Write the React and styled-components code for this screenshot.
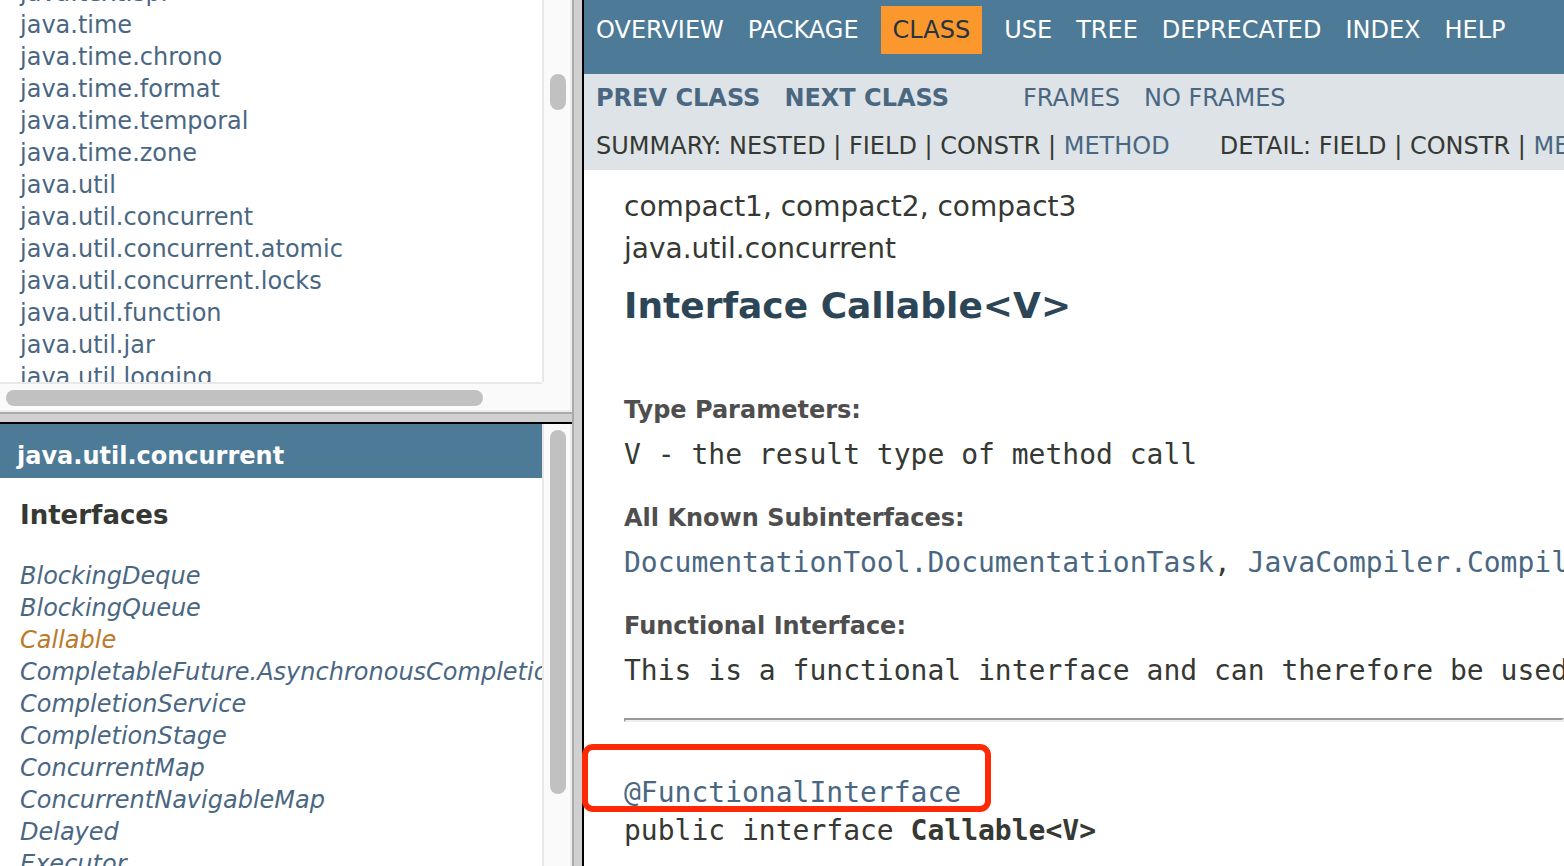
import React from "react";
import styled, { createGlobalStyle } from "styled-components";

const GlobalStyle = createGlobalStyle`
  * { box-sizing: border-box; }
  body {
    margin: 0;
    background: #fff;
    color: #353833;
    font-family: "DejaVu Sans", Verdana, sans-serif;
    font-size: 24px;
    line-height: 28px;
    overflow: hidden;
  }
`;

const Frameset = styled.div`
  display: grid;
  grid-template-columns: 572fr 12px 980fr;
  height: 100vh;
  overflow: hidden;
`;

const LeftColumn = styled.div`
  display: grid;
  grid-template-rows: 412fr 12px 442fr;
  min-width: 0;
  min-height: 0;
`;

const Splitter = styled.div`
  background: #d0d0d0;
  border: 0 solid #000;
  ${(p) =>
    p.$vertical
      ? "border-left: 2px solid #aaa; border-right-width: 2px;"
      : "border-top: 2px solid #aaa; border-bottom-width: 2px;"}
`;

const Frame = styled.section`
  display: grid;
  grid-template-columns: minmax(0, 1fr) 30px;
  grid-template-rows: minmax(0, 1fr) ${(p) => (p.$both ? "30px" : "")};
  min-height: 0;
`;

const FrameBody = styled.div`
  overflow: hidden;
  white-space: nowrap;
`;

const VerticalTrack = styled.div`
  background: #fafafa;
  border-left: 2px solid #e8e8e8;
  border-right: 2px solid #ededed;
  padding: ${(p) => p.$start}px 4px 0 6px;
`;

const HorizontalTrack = styled.div`
  background: #fafafa;
  border-top: 2px solid #e8e8e8;
  border-bottom: 2px solid #ededed;
  padding: 6px 0 4px 6px;
`;

const TrackCorner = styled.div`
  background: #fafafa;
  border-right: 2px solid #ededed;
  border-bottom: 2px solid #ededed;
`;

const Thumb = styled.div`
  background: #c1c1c1;
  border-radius: 8px;
  width: ${(p) => p.$width || "16px"};
  height: ${(p) => p.$height || "16px"};
`;

const List = styled.ul`
  list-style: none;
  margin: ${(p) => p.$scrolled || 0}px 0 0;
  padding: 0 20px;
  line-height: 32px;
`;

const Link = styled.a`
  color: ${(p) => (p.$current ? "#bb7a2a" : "#4a6782")};
  font-style: ${(p) => (p.$italic ? "italic" : "normal")};
  font-weight: ${(p) => (p.$bold ? "bold" : "normal")};
  text-decoration: none;
`;

const PackageBar = styled.h1`
  margin: 0;
  padding: 18px 17px 8px;
  background: #4d7a97;
  color: #fff;
  font-size: 24px;
  line-height: 28px;
  a { color: inherit; text-decoration: none; }
`;

const GroupTitle = styled.h2`
  margin: 22px 20px 30px;
  font-size: 26px;
  line-height: 30px;
`;

const Main = styled.main`
  min-width: 0;
  white-space: nowrap;
`;

const TopNav = styled.ul`
  display: flex;
  list-style: none;
  margin: 0;
  padding: 6px 0 20px;
  background: #4d7a97;
`;

const TopNavItem = styled.li`
  padding: 10px 12px;
  margin: 0 ${(p) => (p.$active ? 10 : 0)}px;
  background: ${(p) => (p.$active ? "#fb982d" : "transparent")};
  color: ${(p) => (p.$active ? "#253441" : "#fff")};
  a { color: inherit; text-decoration: none; }
`;

const SubNav = styled.div`
  background: #dee3e7;
`;

const SubNavRow = styled.div`
  display: flex;
  gap: ${(p) => p.$gap}px;
  padding: 10px 12px;
`;

const SubNavGroup = styled.div`
  display: flex;
  gap: 24px;
`;

const Content = styled.div`
  padding: 16px 0 0 40px;
`;

const SubTitle = styled.div`
  font-size: 28px;
  line-height: 42px;
`;

const Title = styled.h2`
  margin: 15px 0 69px;
  color: #2c4557;
  font-size: 36px;
  line-height: 42px;
`;

const Details = styled.dl`
  margin: 0;
`;

const Term = styled.dt`
  margin-bottom: 13px;
  color: #4e4e4e;
  font-weight: bold;
`;

const Definition = styled.dd`
  margin: 0 0 31px;
  font-family: "DejaVu Sans Mono", monospace;
  font-size: 28px;
  line-height: 36px;
`;

const Rule = styled.hr`
  margin: -2px 0 0;
  border: 2px solid #999;
  border-color: #999 #eee #eee #999;
`;

const Signature = styled.pre`
  position: relative;
  margin: 52px 0 0;
  font-family: "DejaVu Sans Mono", monospace;
  font-size: 28px;
  line-height: 38px;
`;

const Marker = styled.span`
  position: absolute;
  left: -42px;
  top: -30px;
  width: 409px;
  height: 68px;
  border: 6px solid #ff2a05;
  border-radius: 11px;
  pointer-events: none;
`;

const packages = [
  "java.text.spi", "java.time", "java.time.chrono", "java.time.format",
  "java.time.temporal", "java.time.zone", "java.util", "java.util.concurrent",
  "java.util.concurrent.atomic", "java.util.concurrent.locks",
  "java.util.function", "java.util.jar", "java.util.logging",
];

const interfaces = [
  "BlockingDeque", "BlockingQueue", "Callable",
  "CompletableFuture.AsynchronousCompletionTask", "CompletionService",
  "CompletionStage", "ConcurrentMap", "ConcurrentNavigableMap", "Delayed",
  "Executor",
];

const navItems = ["OVERVIEW", "PACKAGE", "CLASS", "USE", "TREE", "DEPRECATED", "INDEX", "HELP"];

export default function App() {
  return (
    <>
      <GlobalStyle />
      <Frameset>
        <LeftColumn>
          <Frame $both>
            <FrameBody>
              <List $scrolled={-23}>
                {packages.map((name) => (
                  <li key={name}><Link href="#">{name}</Link></li>
                ))}
              </List>
            </FrameBody>
            <VerticalTrack $start={74}><Thumb $height="36px" /></VerticalTrack>
            <HorizontalTrack><Thumb $width="89%" /></HorizontalTrack>
            <TrackCorner />
          </Frame>
          <Splitter />
          <Frame>
            <FrameBody>
              <PackageBar><a href="#">java.util.concurrent</a></PackageBar>
              <GroupTitle>Interfaces</GroupTitle>
              <List>
                {interfaces.map((name) => (
                  <li key={name}>
                    <Link href="#" $italic $current={name === "Callable"}>{name}</Link>
                  </li>
                ))}
              </List>
            </FrameBody>
            <VerticalTrack $start={6}><Thumb $height="364px" /></VerticalTrack>
          </Frame>
        </LeftColumn>
        <Splitter $vertical />
        <Main>
          <nav>
            <TopNav>
              {navItems.map((name) => (
                <TopNavItem key={name} $active={name === "CLASS"}>
                  {name === "CLASS" ? name : <a href="#">{name}</a>}
                </TopNavItem>
              ))}
            </TopNav>
            <SubNav>
              <SubNavRow $gap={74}>
                <SubNavGroup>
                  <Link href="#" $bold>PREV CLASS</Link>
                  <Link href="#" $bold>NEXT CLASS</Link>
                </SubNavGroup>
                <SubNavGroup>
                  <Link href="#">FRAMES</Link>
                  <Link href="#">NO FRAMES</Link>
                </SubNavGroup>
              </SubNavRow>
              <SubNavRow $gap={50}>
                <div>SUMMARY: NESTED | FIELD | CONSTR | <Link href="#">METHOD</Link></div>
                <div>DETAIL: FIELD | CONSTR | <Link href="#">METHOD</Link></div>
              </SubNavRow>
            </SubNav>
          </nav>
          <Content>
            <SubTitle>compact1, compact2, compact3</SubTitle>
            <SubTitle>java.util.concurrent</SubTitle>
            <Title>Interface Callable&lt;V&gt;</Title>
            <Details>
              <Term>Type Parameters:</Term>
              <Definition>V - the result type of method call</Definition>
              <Term>All Known Subinterfaces:</Term>
              <Definition>
                <Link href="#">DocumentationTool.DocumentationTask</Link>, <Link href="#">JavaCompiler.CompilationTask</Link>
              </Definition>
              <Term>Functional Interface:</Term>
              <Definition>
                This is a functional interface and can therefore be used as the assignment target for a lambda expression or method reference.
              </Definition>
            </Details>
            <Rule />
            <Signature>
              <Marker />
              <Link href="#">@FunctionalInterface</Link>{"\n"}
              public interface <b>Callable&lt;V&gt;</b>
            </Signature>
          </Content>
        </Main>
      </Frameset>
    </>
  );
}
